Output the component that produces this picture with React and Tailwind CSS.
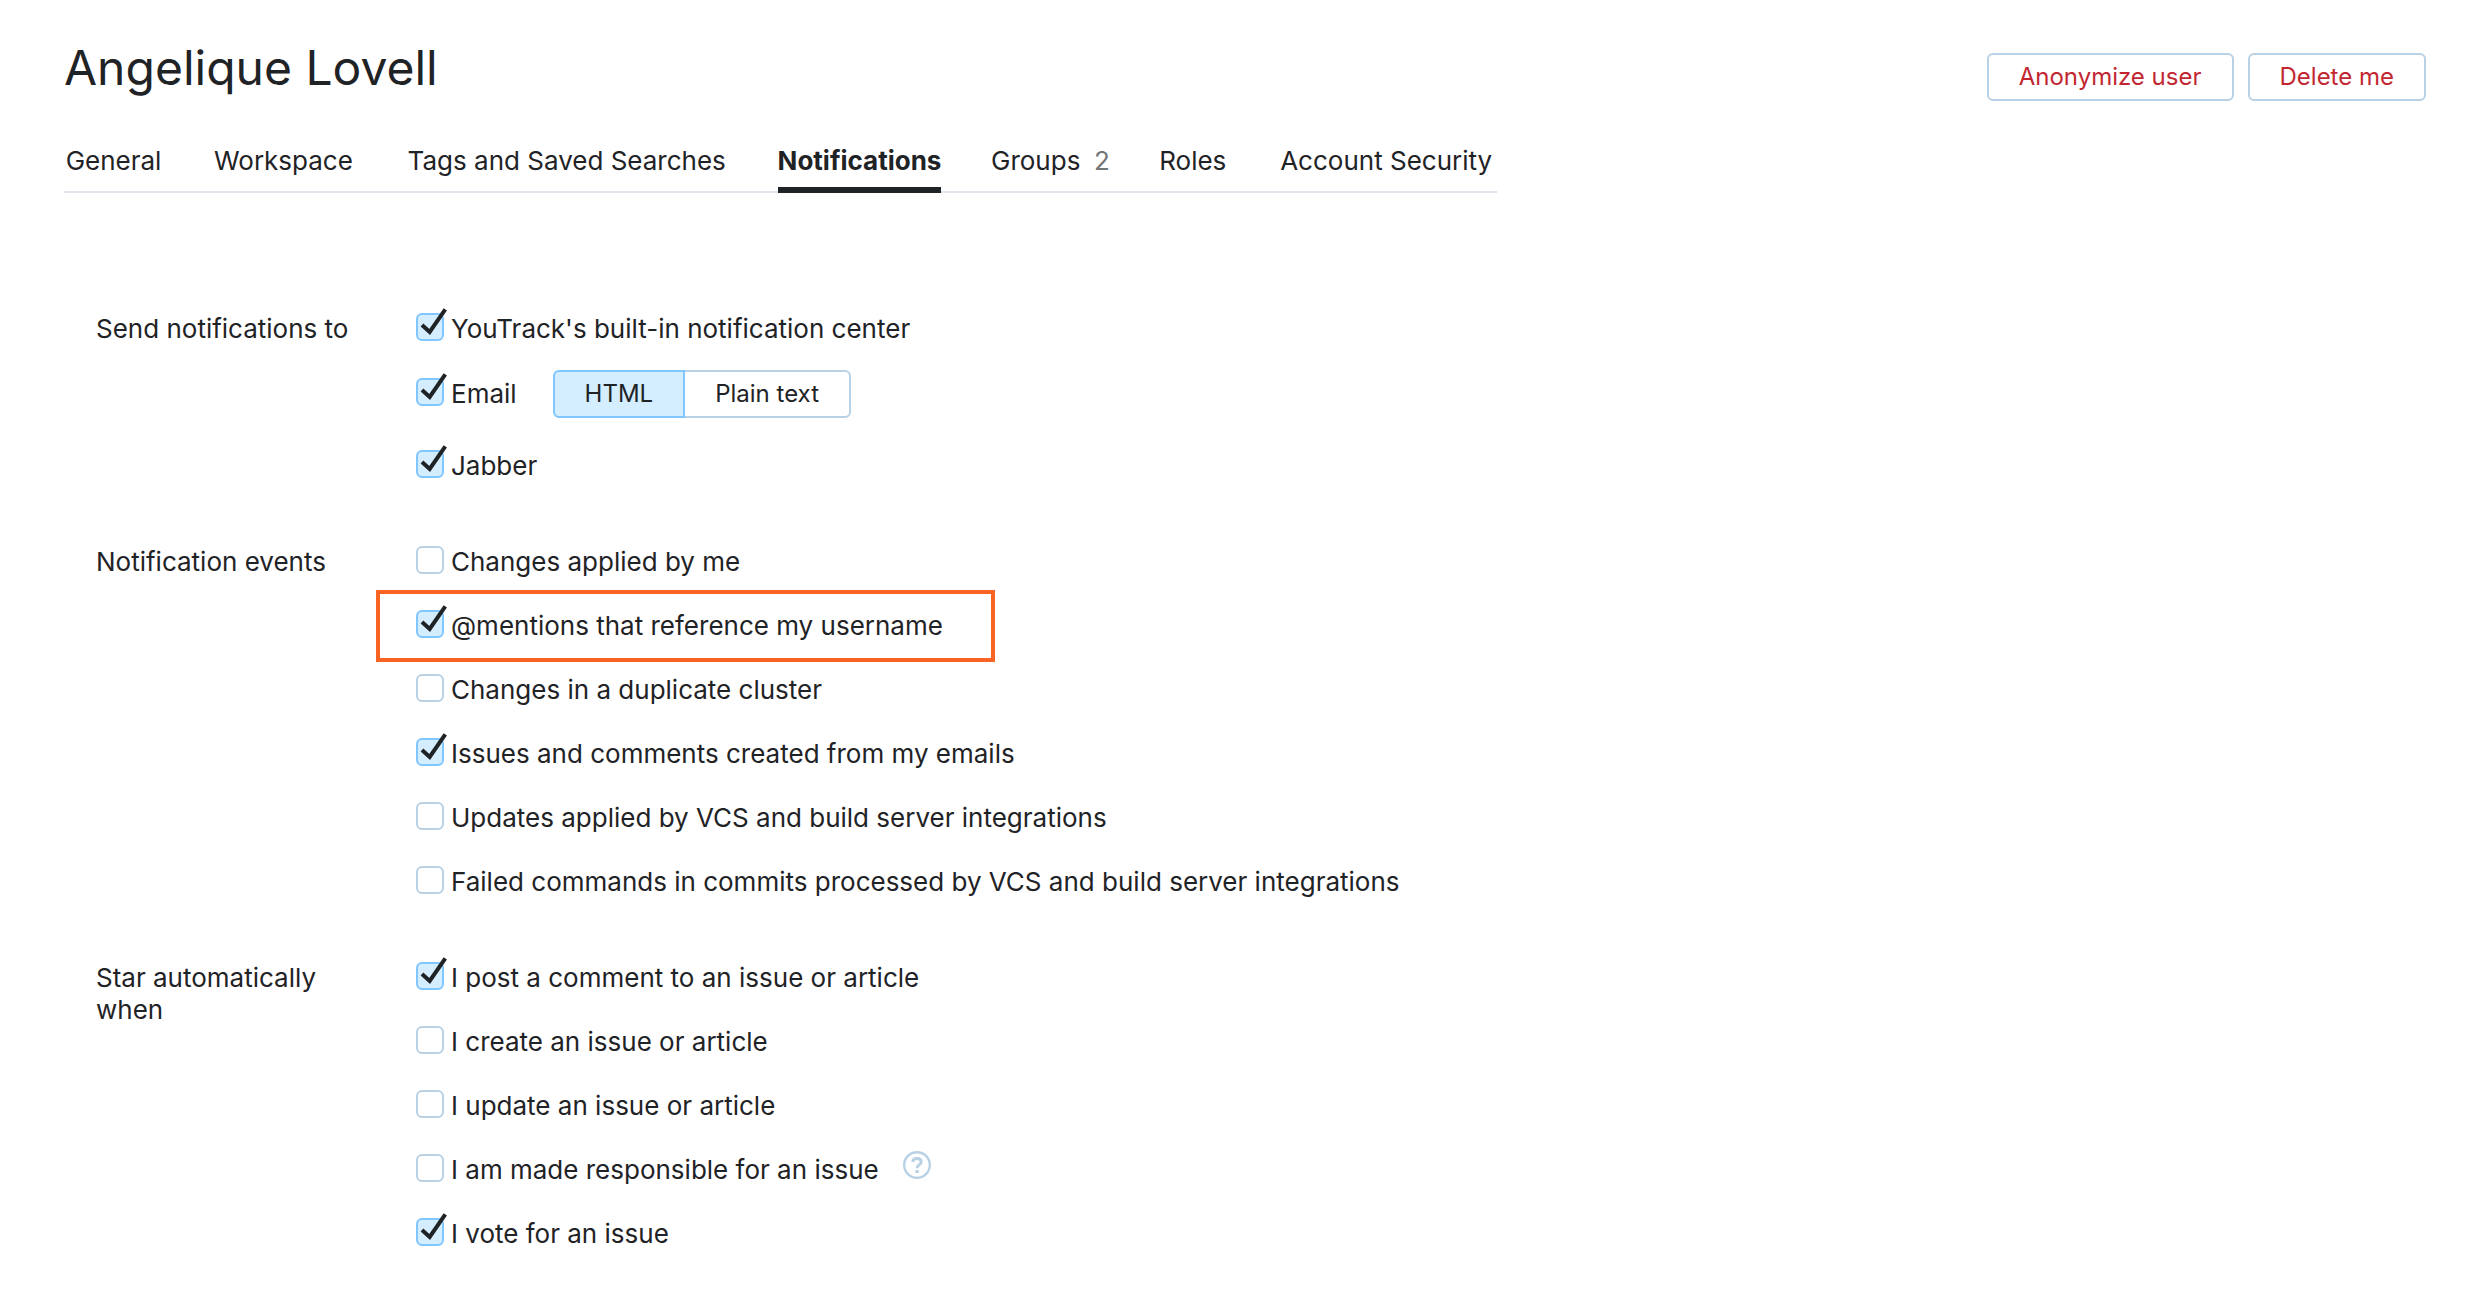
import { useState } from 'react';

const TABS = [
  { label: 'General' },
  { label: 'Workspace' },
  { label: 'Tags and Saved Searches' },
  { label: 'Notifications', active: true },
  { label: 'Groups', count: 2 },
  { label: 'Roles' },
  { label: 'Account Security' },
];

function Tab({ label, count, active }) {
  return (
    <a
      href="#"
      aria-current={active ? 'page' : undefined}
      className={
        active
          ? '-mb-0.5 flex h-12 gap-3 border-b-6 border-[#1f2326] font-bold'
          : '-mb-0.5 flex h-12 gap-3'
      }
    >
      <span
        data-label={label}
        className="flex flex-col items-center after:invisible after:h-0 after:overflow-hidden after:font-bold after:content-[attr(data-label)]"
      >
        {label}
      </span>
      {count && <span className="text-[#737577]">{count}</span>}
    </a>
  );
}

function Checkbox({ label, defaultChecked = false, highlighted = false }) {
  return (
    <label className="relative flex w-fit gap-[7px]">
      <span className="relative size-7 shrink-0">
        <input
          type="checkbox"
          defaultChecked={defaultChecked}
          className="peer block size-7 appearance-none rounded-md border-2 border-[#b8d1e5] bg-white checked:border-[#80c6ff] checked:bg-[#d4edff]"
        />
        <svg
          viewBox="0 0 28 28"
          aria-hidden="true"
          className="pointer-events-none absolute inset-0 hidden size-7 overflow-visible peer-checked:block"
        >
          <path d="M6 12 L13.7 19 L29.3 -3.6" fill="none" stroke="#1f2326" strokeWidth="4" />
        </svg>
      </span>
      {label}
      {highlighted && (
        <span className="pointer-events-none absolute -inset-y-5 -right-13 -left-10 border-4 border-[#f96424]" />
      )}
    </label>
  );
}

function FormatSwitch() {
  const [format, setFormat] = useState('HTML');
  return (
    <div role="radiogroup" aria-label="Email format" className="flex text-2xl">
      {['HTML', 'Plain text'].map((name) => (
        <label
          key={name}
          className="relative -ml-0.5 flex h-12 items-center border-2 border-[#b8d1e5] px-[30px] first:ml-0 first:rounded-l-md last:rounded-r-md has-checked:z-10 has-checked:border-[#80c6ff] has-checked:bg-[#d4edff]"
        >
          <input
            type="radio"
            name="format"
            value={name}
            checked={format === name}
            onChange={() => setFormat(name)}
            className="absolute inset-0 appearance-none"
          />
          {name}
        </label>
      ))}
    </div>
  );
}

function HelpButton() {
  return (
    <button type="button" aria-label="Help" className="-mt-[3px] h-7">
      <svg viewBox="0 0 28 28" className="size-7" fill="none" stroke="#b8d1e5">
        <circle cx="14" cy="14" r="12.8" strokeWidth="2.4" />
        <path
          d="M9.8 11 C9.8 8.6 11.6 7.5 14 7.5 C16.5 7.5 18.2 8.8 18.2 10.9 C18.2 12.6 17.2 13.3 16 14 C14.7 14.8 14.1 15.3 14.1 17.2"
          strokeWidth="3"
        />
        <path d="M14.1 19 V22" strokeWidth="3.4" />
      </svg>
    </button>
  );
}

function Section({ title, children }) {
  return (
    <section className="flex">
      <h2 className="w-80 shrink-0 pr-14">{title}</h2>
      <div className="flex flex-col">{children}</div>
    </section>
  );
}

export default function App() {
  return (
    <div className="bg-white px-16 pt-10 pb-12 font-['Inter',sans-serif] text-[26px] leading-8 text-[#1f2326]">
      <header className="flex items-start justify-between">
        <h1 className="text-5xl leading-14">Angelique Lovell</h1>
        <div className="flex gap-3.5 pt-[13px] text-2xl text-[#c22731]">
          <button type="button" className="h-12 rounded-md border-2 border-[#b8d1e5] px-[30px]">
            Anonymize user
          </button>
          <button type="button" className="h-12 rounded-md border-2 border-[#b8d1e5] px-[30px]">
            Delete me
          </button>
        </div>
      </header>

      <nav className="mt-11 flex w-fit gap-12 border-b-2 border-[#dfe5eb]">
        {TABS.map((tab) => (
          <Tab key={tab.label} {...tab} />
        ))}
      </nav>

      <main className="mt-30 flex flex-col gap-16 pl-8">
        <Section title="Send notifications to">
          <Checkbox label="YouTrack's built-in notification center" defaultChecked />
          <div className="mt-[25px] mb-8 flex items-center gap-9">
            <Checkbox label="Email" defaultChecked />
            <FormatSwitch />
          </div>
          <Checkbox label="Jabber" defaultChecked />
        </Section>

        <Section title="Notification events">
          <div className="flex flex-col gap-8">
            <Checkbox label="Changes applied by me" />
            <Checkbox label="@mentions that reference my username" defaultChecked highlighted />
            <Checkbox label="Changes in a duplicate cluster" />
            <Checkbox label="Issues and comments created from my emails" defaultChecked />
            <Checkbox label="Updates applied by VCS and build server integrations" />
            <Checkbox label="Failed commands in commits processed by VCS and build server integrations" />
          </div>
        </Section>

        <Section title="Star automatically when">
          <div className="flex flex-col gap-8">
            <Checkbox label="I post a comment to an issue or article" defaultChecked />
            <Checkbox label="I create an issue or article" />
            <Checkbox label="I update an issue or article" />
            <div className="flex gap-6">
              <Checkbox label="I am made responsible for an issue" />
              <HelpButton />
            </div>
            <Checkbox label="I vote for an issue" defaultChecked />
          </div>
        </Section>
      </main>
    </div>
  );
}
